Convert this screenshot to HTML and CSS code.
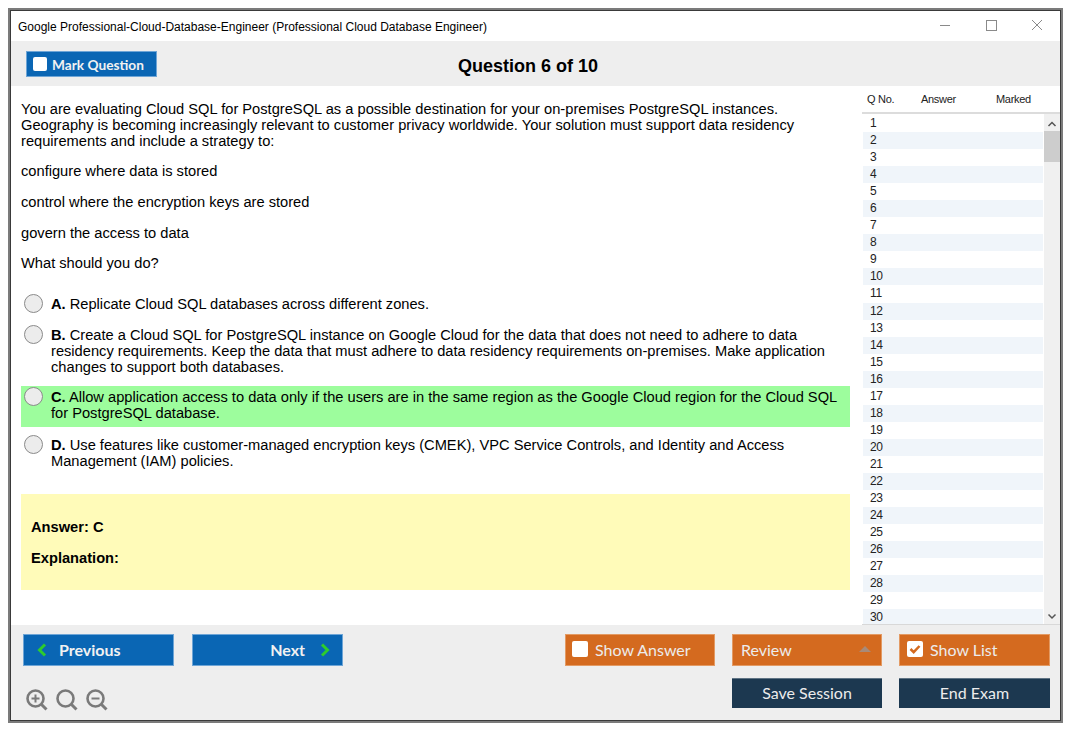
FILE: index.html
```html
<!DOCTYPE html>
<html lang="en">
<head>
<meta charset="utf-8">
<title>Exam</title>
<link rel="stylesheet" href="styles.css">
</head>
<body>
<div class="window"><div class="frame">
  <header class="titlebar">
    <span class="title">Google Professional-Cloud-Database-Engineer (Professional Cloud Database Engineer)</span>
    <div class="winctl">
      <svg width="16" height="16" viewBox="0 0 16 16"><path d="M3 8.500h10" stroke="#8a8a8a" fill="none"/></svg>
      <svg width="16" height="16" viewBox="0 0 16 16"><rect x="3.500" y="3.500" width="10" height="10" stroke="#8a8a8a" fill="none"/></svg>
      <svg width="16" height="16" viewBox="0 0 16 16"><path d="M3 3l10 10M13 3L3 13" stroke="#8a8a8a" fill="none"/></svg>
    </div>
  </header>
  <div class="toolbar">
    <div class="btn blue mark"><span class="box"></span><span>Mark Question</span></div>
    <h1 class="qtitle">Question 6 of 10</h1>
  </div>
  <div class="main">
    <section class="content">
      <p class="para">You are evaluating Cloud SQL for PostgreSQL as a possible destination for your on-premises PostgreSQL instances. Geography is becoming increasingly relevant to customer privacy worldwide. Your solution must support data residency requirements and include a strategy to:</p>
      <p class="para">configure where data is stored</p>
      <p class="para">control where the encryption keys are stored</p>
      <p class="para">govern the access to data</p>
      <p class="para">What should you do?</p>
      <div class="options">
        <div class="option"><span class="radio"></span><div><b>A.</b> Replicate Cloud SQL databases across different zones.</div></div>
        <div class="option"><span class="radio"></span><div><b>B.</b> Create a Cloud SQL for PostgreSQL instance on Google Cloud for the data that does not need to adhere to data residency requirements. Keep the data that must adhere to data residency requirements on-premises. Make application changes to support both databases.</div></div>
        <div class="option correct"><span class="radio"></span><div><b>C.</b> Allow application access to data only if the users are in the same region as the Google Cloud region for the Cloud SQL for PostgreSQL database.</div></div>
        <div class="option"><span class="radio"></span><div><b>D.</b> Use features like customer-managed encryption keys (CMEK), VPC Service Controls, and Identity and Access Management (IAM) policies.</div></div>
      </div>
      <div class="answer">
        <p class="ansline">Answer: C</p>
        <p class="ansline">Explanation:</p>
      </div>
    </section>
    <aside class="side">
      <div class="sidehead"><span class="c1">Q No.</span><span class="c2">Answer</span><span class="c3">Marked</span></div>
      <div class="sidebody">
        <div class="rows">
          <div class="row">1</div><div class="row">2</div><div class="row">3</div><div class="row">4</div><div class="row">5</div>
          <div class="row">6</div><div class="row">7</div><div class="row">8</div><div class="row">9</div><div class="row">10</div>
          <div class="row">11</div><div class="row">12</div><div class="row">13</div><div class="row">14</div><div class="row">15</div>
          <div class="row">16</div><div class="row">17</div><div class="row">18</div><div class="row">19</div><div class="row">20</div>
          <div class="row">21</div><div class="row">22</div><div class="row">23</div><div class="row">24</div><div class="row">25</div>
          <div class="row">26</div><div class="row">27</div><div class="row">28</div><div class="row">29</div><div class="row">30</div>
        </div>
        <div class="scroll">
          <svg class="arrow" width="16" height="12" viewBox="0 0 16 12"><path d="M4.500 8L8 4.500 11.500 8" stroke="#555" stroke-width="1.500" fill="none"/></svg>
          <div class="thumb"></div>
          <svg class="arrow" width="16" height="12" viewBox="0 0 16 12"><path d="M4.500 4.500L8 8l3.500-3.500" stroke="#555" stroke-width="1.500" fill="none"/></svg>
        </div>
      </div>
    </aside>
  </div>
  <footer class="footer">
    <div class="frow">
      <div class="btn blue nav prev"><svg width="12" height="16" viewBox="0 0 12 16"><path d="M9 2.500L3.500 8 9 13.500" stroke="#2ecc2e" stroke-width="3" fill="none"/></svg><span>Previous</span></div>
      <div class="btn blue nav next"><span>Next</span><svg width="12" height="16" viewBox="0 0 12 16"><path d="M3 2.500L8.500 8 3 13.500" stroke="#2ecc2e" stroke-width="3" fill="none"/></svg></div>
      <div class="spacer"></div>
      <div class="btn orange showans"><span class="box big"></span><span>Show Answer</span></div>
      <div class="btn orange review"><span>Review</span><svg width="12" height="6" viewBox="0 0 12 6"><path d="M0 6L6 0l6 6z" fill="#a88a78"/></svg></div>
      <div class="btn orange showlist"><span class="box big"><svg width="16" height="16" viewBox="0 0 16 16"><path d="M3.500 8l3.200 3.200L12.500 5" stroke="#d46a1f" stroke-width="2.500" fill="none"/></svg></span><span>Show List</span></div>
    </div>
    <div class="frow second">
      <div class="zooms">
        <svg width="22" height="22" viewBox="0 0 22 22"><circle cx="9.500" cy="9.500" r="8" stroke="#7a7a7a" stroke-width="2.600" fill="none"/><path d="M15 15L20.500 20.500" stroke="#7a7a7a" stroke-width="3" fill="none"/><path d="M5.500 9.500h8M9.500 5.500v8" stroke="#7a7a7a" stroke-width="2" fill="none"/></svg>
        <svg width="22" height="22" viewBox="0 0 22 22"><circle cx="9.500" cy="9.500" r="8" stroke="#7a7a7a" stroke-width="2.600" fill="none"/><path d="M15 15L20.500 20.500" stroke="#7a7a7a" stroke-width="3" fill="none"/></svg>
        <svg width="22" height="22" viewBox="0 0 22 22"><circle cx="9.500" cy="9.500" r="8" stroke="#7a7a7a" stroke-width="2.600" fill="none"/><path d="M15 15L20.500 20.500" stroke="#7a7a7a" stroke-width="3" fill="none"/><path d="M5.500 9.500h8" stroke="#7a7a7a" stroke-width="2" fill="none"/></svg>
      </div>
      <div class="spacer"></div>
      <div class="btn navy save">Save Session</div>
      <div class="btn navy end">End Exam</div>
    </div>
  </footer>
</div></div>
</body>
</html>
```
FILE: styles.css
```css
* { box-sizing: border-box; }
html, body { margin: 0; padding: 0; background: #fff; }
body { padding: 8px 12px 12px 8px; }
.window { width: 1055px; height: 715px; border: 2px solid #7b7b7b; }
.frame {
  height: 100%; border: 1px solid #3a3a3a; display: flex; flex-direction: column;
  font-family: "Liberation Sans", Arial, sans-serif; color: #000; background: #fff;
}
.titlebar { height: 30px; flex: none; display: flex; align-items: center; padding-left: 7px; }
.title { font-size: 12px; position: relative; top: 1px; }
.spacer { flex: 1; }
.winctl { margin-left: auto; display: flex; gap: 30px; padding: 0 15px 2px 0; }
.toolbar { height: 45px; flex: none; background: #eeeeee; display: flex; align-items: flex-start; padding: 10px 15px 0; position: relative; }
.qtitle { position: absolute; left: 0; right: 15px; top: 15px; margin: 0; text-align: center; font-size: 18px; font-weight: bold; line-height: 21px; }
.btn {
  font-family: Lato, sans-serif; color: #ececec; display: flex; align-items: center;
  font-size: 16px; width: 150px; height: 32px; gap: 7px; padding: 0 8px 2px;
}
.blue { background: #0a66b4; border: 1px solid #6ea5d6; color: #f1f1f1; }
.orange { background: #d46a1f; border: 1px solid #e39a63; }
.navy { background: #1c3850; justify-content: center; height: 30px; border-top: 1px solid #5f7384; }
.mark { width: 131px; height: 26px; font-size: 13.7px; font-weight: bold; padding: 0 6px; gap: 5px; }
.box { width: 14px; height: 14px; background: #fff; border-radius: 2px; flex: none; }
.box.big { width: 16px; height: 16px; display: block; }
.box svg { display: block; }
.main { height: 539px; flex: none; display: flex; }
.content { width: 851px; flex: none; padding: 14.7px 12px 0 10px; font-size: 14.67px; line-height: 16px; }
.para { margin: 0 0 14.67px; }
.options { margin-top: 21px; display: flex; flex-direction: column; gap: 6px; }
.option { display: flex; gap: 8px; padding: 4px 8px 5px 3px; }
.option .radio { width: 19px; height: 19px; border-radius: 50%; background: #ececec; border: 1px solid #8a8a8a; flex: none; margin: -2px 0 -1px; }
.correct { background: #9dfd9d; padding-top: 3px; padding-bottom: 6px; }
.option b { font-weight: bold; }
.answer { margin-top: 20px; height: 96px; background: #fffbb9; padding: 25px 10px 0; font-weight: bold; }
.ansline { margin: 0 0 15px; }
.side { flex: 1; display: flex; flex-direction: column; min-width: 0; border-bottom: 1px solid #d8d8d8; }
.sidehead { height: 27px; flex: none; position: relative; margin-top: 1px; border-bottom: 2px solid #dcdcdc; font-size: 11px; letter-spacing: -0.3px; color: #222; }
.sidehead span { position: absolute; top: 6px; }
.c1 { left: 5px; } .c2 { left: 59px; } .c3 { left: 134px; }
.sidebody { flex: 1; display: flex; min-height: 0; overflow: hidden; }
.rows { width: 181px; flex: none; padding: 1px 0 0 1px; overflow: hidden; }
.row { height: 17.06px; line-height: 17px; font-size: 12px; letter-spacing: -0.3px; padding-left: 7px; color: #222; }
.row:nth-child(even) { background: #f0f5fa; }
.scroll { flex: 1; background: #f0f0f0; display: flex; flex-direction: column; align-items: center; padding: 4px 0 2px; margin-left: 1px; }
.arrow { flex: none; display: block; }
.thumb { height: 31px; width: 100%; background: #cdcdcd; margin-top: 1px; }
.scroll .arrow:last-child { margin-top: auto; }
.footer { flex: 1; background: #eeeeee; padding: 9px 10px 0 12px; }
.frow { display: flex; gap: 17px; }
.second { margin-top: 12px; align-items: flex-start; }
.nav { font-weight: bold; width: 151px; }
.nav svg { margin-top: 2px; }
.prev { padding-left: 12px; gap: 11px; }
.next { justify-content: flex-end; padding-right: 11px; gap: 14px; margin-left: 1px; }
.showans { padding-left: 6px; }
.showlist { width: 151px; padding-left: 7px; }
.review { justify-content: space-between; padding-right: 10px; }
.end { width: 151px; }
.zooms { display: flex; gap: 8px; margin-left: 3px; margin-top: 11px; }
.zooms svg { display: block; }
```
